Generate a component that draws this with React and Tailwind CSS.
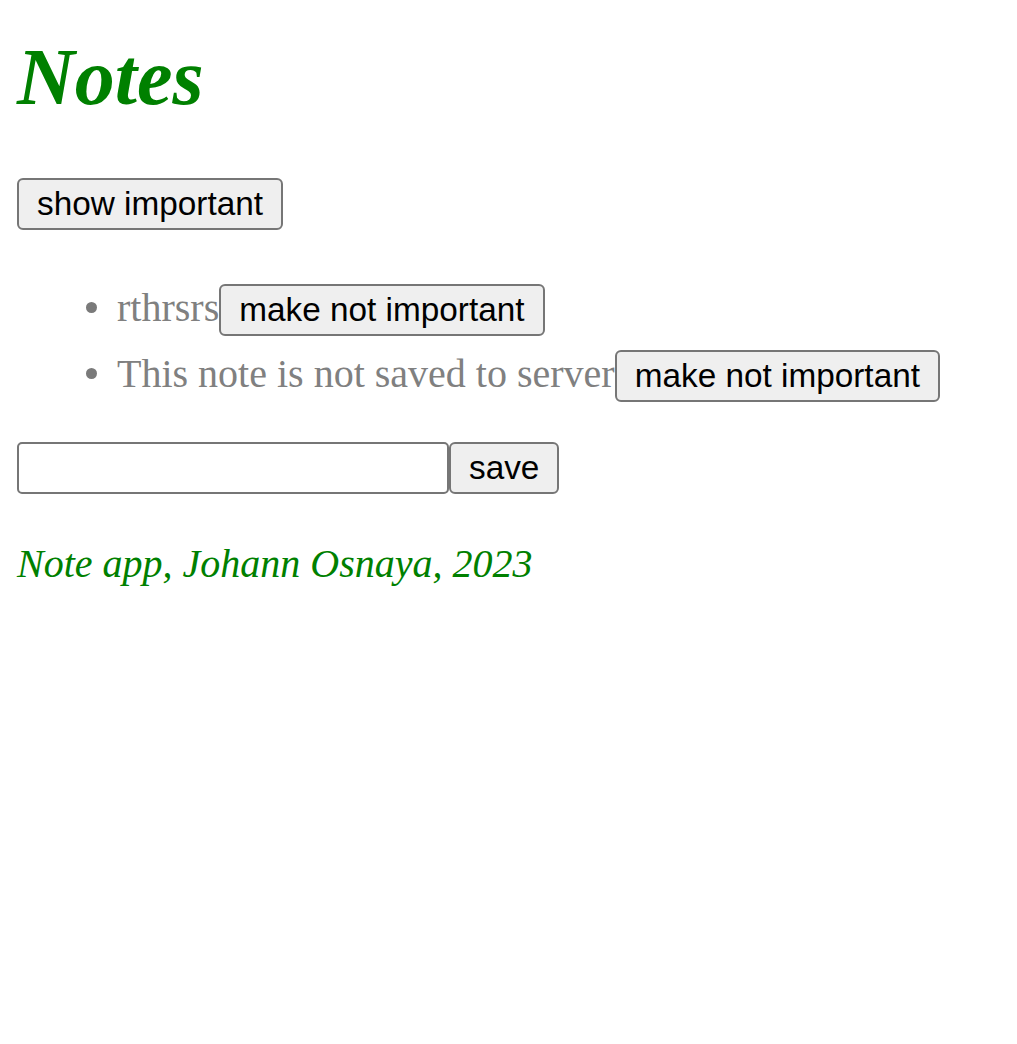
import React from "react";

const btn =
  "h-[52px] px-[18px] flex items-center bg-[#efefef] border-2 border-[#767676] rounded-[6px] text-black text-[33.33px] leading-normal [font-family:'Liberation_Sans',Arial,sans-serif] whitespace-nowrap";

export default function App() {
  return (
    <div className="min-h-[1044px] bg-white px-[17px] [font-family:'Liberation_Serif','Times_New_Roman',serif]">
      <h1 className="mt-[33px] m-0 text-[80px] leading-[88px] font-bold italic text-[#008000]">
        Notes
      </h1>
      <div className="mt-[57px] flex">
        <button className={btn}>show important</button>
      </div>
      <ul className="mt-[52px] pl-[69px] flex flex-col gap-[14px]">
        {[
          "rthrsrs",
          "This note is not saved to server",
        ].map((t) => (
          <li key={t} className="flex items-center h-[52px]">
            <span className="w-[11px] h-[11px] rounded-full bg-[#7a7a7a] shrink-0 -mt-[2px]" />
            <div className="ml-[20px] flex items-baseline">
              <span className="text-[40px] text-[#808080] leading-normal whitespace-nowrap">{t}</span>
              <button className={btn}>make not important</button>
            </div>
          </li>
        ))}
      </ul>
      <form className="mt-[42px] flex" onSubmit={(e) => e.preventDefault()}>
        <input className="w-[432px] h-[52px] bg-white border-2 border-[#767676] rounded-[5px] outline-none" />
        <button className={btn} type="submit">save</button>
      </form>
      <div className="mt-[47px] text-[40px] leading-[46px] italic text-[#008000]">
        Note app, Johann Osnaya, 2023
      </div>
    </div>
  );
}
